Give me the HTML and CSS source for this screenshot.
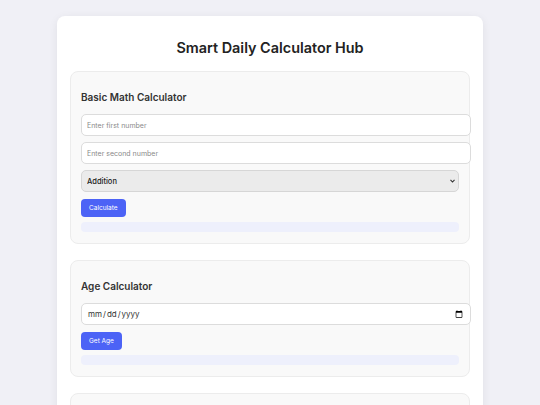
FILE: index.html
```html
<!DOCTYPE html>
<html lang="en">
<head>
<meta charset="utf-8">
<title>Smart Daily Calculator Hub</title>
<link rel="stylesheet" href="styles.css">
</head>
<body>
<div class="container">
  <h1 class="title">Smart Daily Calculator Hub</h1>

  <section class="card">
    <h2 class="card-title">Basic Math Calculator</h2>
    <input class="field" type="number" placeholder="Enter first number">
    <input class="field" type="number" placeholder="Enter second number">
    <div class="select-wrap">
      <select class="select">
        <option>Addition</option>
        <option>Subtraction</option>
        <option>Multiplication</option>
        <option>Division</option>
      </select>
      <svg class="select-arrow" width="5" height="4" viewBox="0 0 5 4" aria-hidden="true"><path d="M0.5 0.8 L2.5 3 L4.5 0.8" fill="none" stroke="#333" stroke-width="1.1"/></svg>
    </div>
    <button class="btn">Calculate</button>
    <div class="result"></div>
  </section>

  <section class="card">
    <h2 class="card-title">Age Calculator</h2>
    <input class="field date" type="date">
    <button class="btn">Get Age</button>
    <div class="result"></div>
  </section>

  <section class="card">
    <h2 class="card-title">BMI Calculator</h2>
    <input class="field" type="number" placeholder="Weight (kg)">
  </section>
</div>
</body>
</html>
```

FILE: styles.css
```css
html, body {
  margin: 0;
  padding: 0;
}
body {
  background: #f0f0f6;
  font-family: Inter, "Open Sans", sans-serif;
  color: #333;
}
.container {
  width: 400px;
  margin: 16px auto 0;
  padding: 20px 13px 13px;
  background: #fff;
  border-radius: 8px;
  box-shadow: 0 2px 10px rgba(0, 0, 0, 0.07);
}
.title {
  margin: 0 0 11px;
  font-size: 14.4px;
  line-height: 24px;
  font-weight: 600;
  text-align: center;
  color: #222;
}
.card {
  display: flex;
  flex-direction: column;
  align-items: flex-start;
  padding: 11px 10px;
  margin-bottom: 16px;
  background: #f9f9f9;
  border: 1px solid #ececec;
  border-radius: 8px;
}
.card-title {
  margin: 6px 0 9px;
  font-size: 10px;
  line-height: 16px;
  font-weight: 600;
  color: #333;
}
.field {
  box-sizing: content-box;
  width: 100%;
  height: 20px;
  padding: 0 5px;
  margin: 0 0 6px;
  border: 1px solid #dcdcdc;
  border-radius: 5px;
  background: #fff;
  font-family: inherit;
  font-size: 7px;
  color: #333;
  outline: none;
}
.field::placeholder {
  color: #8a8a8a;
}
.date {
  font-size: 8px;
  margin-bottom: 7px;
}
.select-wrap {
  position: relative;
  align-self: stretch;
  margin: 0 0 7px;
}
.select {
  display: block;
  box-sizing: border-box;
  width: 100%;
  height: 22px;
  padding: 0 5px;
  border: 1px solid #d6d6d6;
  border-radius: 5px;
  background: #ebebeb;
  font-family: inherit;
  font-size: 7.5px;
  font-weight: 500;
  color: #222;
  appearance: none;
  -webkit-appearance: none;
  outline: none;
}
.select-arrow {
  position: absolute;
  right: 4px;
  top: 9px;
  pointer-events: none;
}
.btn {
  height: 18px;
  padding: 0 8px;
  margin: 0 0 5px;
  border: 0;
  border-radius: 4px;
  background: #4c63f6;
  color: #fff;
  font-family: inherit;
  font-size: 6.5px;
  cursor: pointer;
}
.result {
  align-self: stretch;
  height: 10px;
  background: #eef0fc;
  border-radius: 4px;
}
```
